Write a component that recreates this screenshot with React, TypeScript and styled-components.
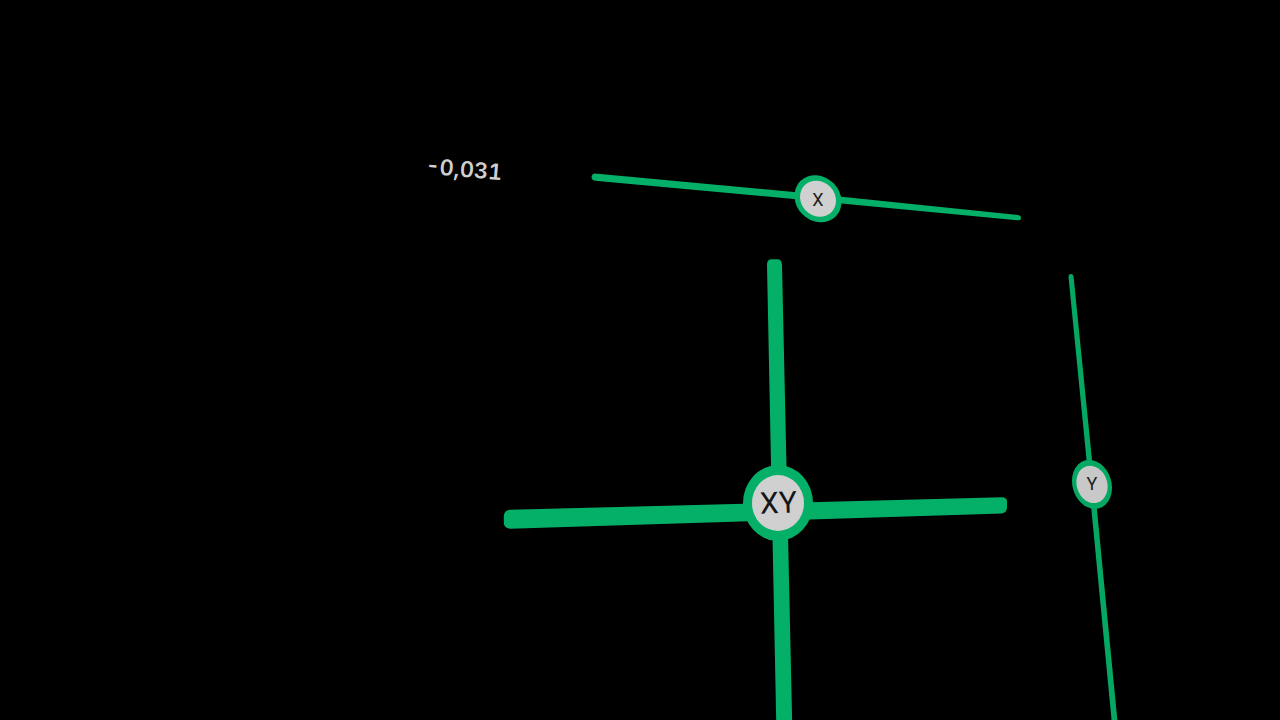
import React, { useRef, useState } from 'react';
import styled, { createGlobalStyle } from 'styled-components';

const GREEN = '#04b067';
const FACE = '#d0d0d0';
const REST = -0.031;

const GlobalStyle = createGlobalStyle`
  html, body { margin: 0; background: #000; }
`;

const Stage = styled.main`
  position: relative;
  min-height: 100vh;
  overflow: hidden;
  background: #000;
  font-family: Roboto, 'Liberation Sans', sans-serif;
`;

/* The controls float freely in space, placed from the centre of the view. */
const Floating = styled.div<{ $x: number; $y: number; $w: number; $h: number }>`
  position: absolute;
  left: calc(50% + ${(p) => p.$x}px);
  top: calc(50% + ${(p) => p.$y}px);
  width: ${(p) => p.$w}px;
  height: ${(p) => p.$h}px;
`;

const Readout = styled.output`
  display: flex;
  align-items: center;
  justify-content: center;
  height: 100%;
  color: #cfcfcf;
  font: 600 22px/24px Inter, sans-serif;
  font-variant-numeric: tabular-nums;
  white-space: nowrap;
  transform: rotate(5deg);
`;

const Drawing = styled.svg`
  display: block;
  overflow: visible;
`;

const KnobLabel = styled.text`
  fill: #222;
  font-size: 18px;
  text-anchor: middle;
`;

const Range = styled.input<{ $angle: number; $vertical?: boolean }>`
  position: absolute;
  inset: 0;
  width: 100%;
  height: 100%;
  margin: 0;
  appearance: none;
  background: transparent;
  cursor: grab;
  transform: rotate(${(p) => p.$angle}deg);
  writing-mode: ${(p) => (p.$vertical ? 'vertical-lr' : 'horizontal-tb')};

  &::-webkit-slider-thumb {
    appearance: none;
    width: 46px;
    height: 46px;
    border-radius: 50%;
    background: transparent;
  }
`;

const PadKnob = styled.button`
  position: absolute;
  left: 253px;
  top: 215px;
  display: flex;
  align-items: center;
  justify-content: center;
  width: 70px;
  height: 76px;
  padding: 0;
  border: solid ${GREEN};
  border-width: 10px 9px;
  border-radius: 50%;
  background: ${FACE};
  color: #151515;
  font: 400 30px/32px Roboto, 'Liberation Sans', sans-serif;
  cursor: grab;
  touch-action: none;
`;

const PadLabel = styled.span`
  transform: rotate(-2deg);
`;

export default function App() {
  const [x, setX] = useState(REST);
  const [y, setY] = useState(0);
  const grip = useRef<{ px: number; py: number; x: number; y: number } | null>(null);

  const clamp = (n: number) => Math.max(-1, Math.min(1, n));
  const dx = x - REST;

  const startDrag = (e: React.PointerEvent<HTMLButtonElement>) => {
    e.currentTarget.setPointerCapture(e.pointerId);
    grip.current = { px: e.clientX, py: e.clientY, x, y };
  };
  const drag = (e: React.PointerEvent<HTMLButtonElement>) => {
    const g = grip.current;
    if (!g) return;
    setX(clamp(g.x + (e.clientX - g.px) / 240));
    setY(clamp(g.y + (e.clientY - g.py) / 240));
  };
  const endDrag = () => {
    grip.current = null;
  };

  return (
    <Stage>
      <GlobalStyle />

      <Floating $x={-226} $y={-211} $w={100} $h={40}>
        <Readout htmlFor="axis-x">{x.toFixed(3).replace('.', ',')}</Readout>
      </Floating>

      <Floating $x={-60} $y={-200} $w={450} $h={80}>
        <Drawing viewBox="0 0 450 80" width="450" height="80" aria-hidden="true">
          <path
            fill={GREEN}
            d="M15 13.5 L230 33.5 L438 55 Q441 55.5 441 58 Q441 60.5 437 60.3 L230 40.5 L15 20.7 Q11.5 20 11.5 17 Q12 13.5 15 13.5Z"
          />
          <g transform={`translate(${238 + dx * 205} ${38.8 + dx * 19})`}>
            <ellipse rx="25" ry="22" transform="rotate(45)" fill={GREEN} />
            <ellipse rx="19" ry="17" transform="rotate(45)" fill={FACE} />
            <KnobLabel y="7">X</KnobLabel>
          </g>
        </Drawing>
        <Range
          id="axis-x"
          aria-label="X"
          type="range"
          min={-1}
          max={1}
          step={0.001}
          value={x}
          $angle={5}
          onChange={(e) => setX(Number(e.target.value))}
        />
      </Floating>

      <Floating $x={-150} $y={-110} $w={530} $h={520}>
        <Drawing viewBox="0 0 530 520" width="530" height="520" aria-hidden="true">
          <path
            fill={GREEN}
            d="M281 9.3 H288 Q291.7 10 292 15 L303 510 H287 L277 15 Q277 9.5 281 9.3Z"
          />
          <path
            fill={GREEN}
            d="M20 259.8 L512 247.3 Q516.5 247.5 517 251 V258 Q516.5 262.5 512 263.5 L20 278.7 Q14 278 13.8 273 V266 Q14.5 260 20 259.8Z"
          />
          <path
            d="M260 271 Q268 285 281 289.5"
            transform={`translate(${dx * 240} ${y * 240})`}
            fill="none"
            stroke="#8a9a90"
            strokeWidth="2"
          />
        </Drawing>
        <PadKnob
          type="button"
          style={{ translate: `${dx * 240}px ${y * 240}px` }}
          onPointerDown={startDrag}
          onPointerMove={drag}
          onPointerUp={endDrag}
        >
          <PadLabel>XY</PadLabel>
        </PadKnob>
      </Floating>

      <Floating $x={420} $y={-100} $w={70} $h={480}>
        <Drawing viewBox="0 0 70 480" width="70" height="480" aria-hidden="true">
          <path
            fill="#04a862"
            d="M8.5 17 Q8.5 14 11 14 Q13.3 14 13.6 17 L36 240 L58.8 475 H53 L30.5 240Z"
          />
          <g transform={`translate(${32 + y * 21} ${224.4 + y * 210})`}>
            <ellipse rx="25" ry="19.5" transform="rotate(73)" fill="#04a862" />
            <ellipse rx="19" ry="15.3" transform="rotate(73)" fill="#c8c8c8" />
            <KnobLabel y="6">Y</KnobLabel>
          </g>
        </Drawing>
        <Range
          aria-label="Y"
          type="range"
          min={-1}
          max={1}
          step={0.001}
          value={y}
          $angle={-5}
          $vertical
          onChange={(e) => setY(Number(e.target.value))}
        />
      </Floating>
    </Stage>
  );
}
